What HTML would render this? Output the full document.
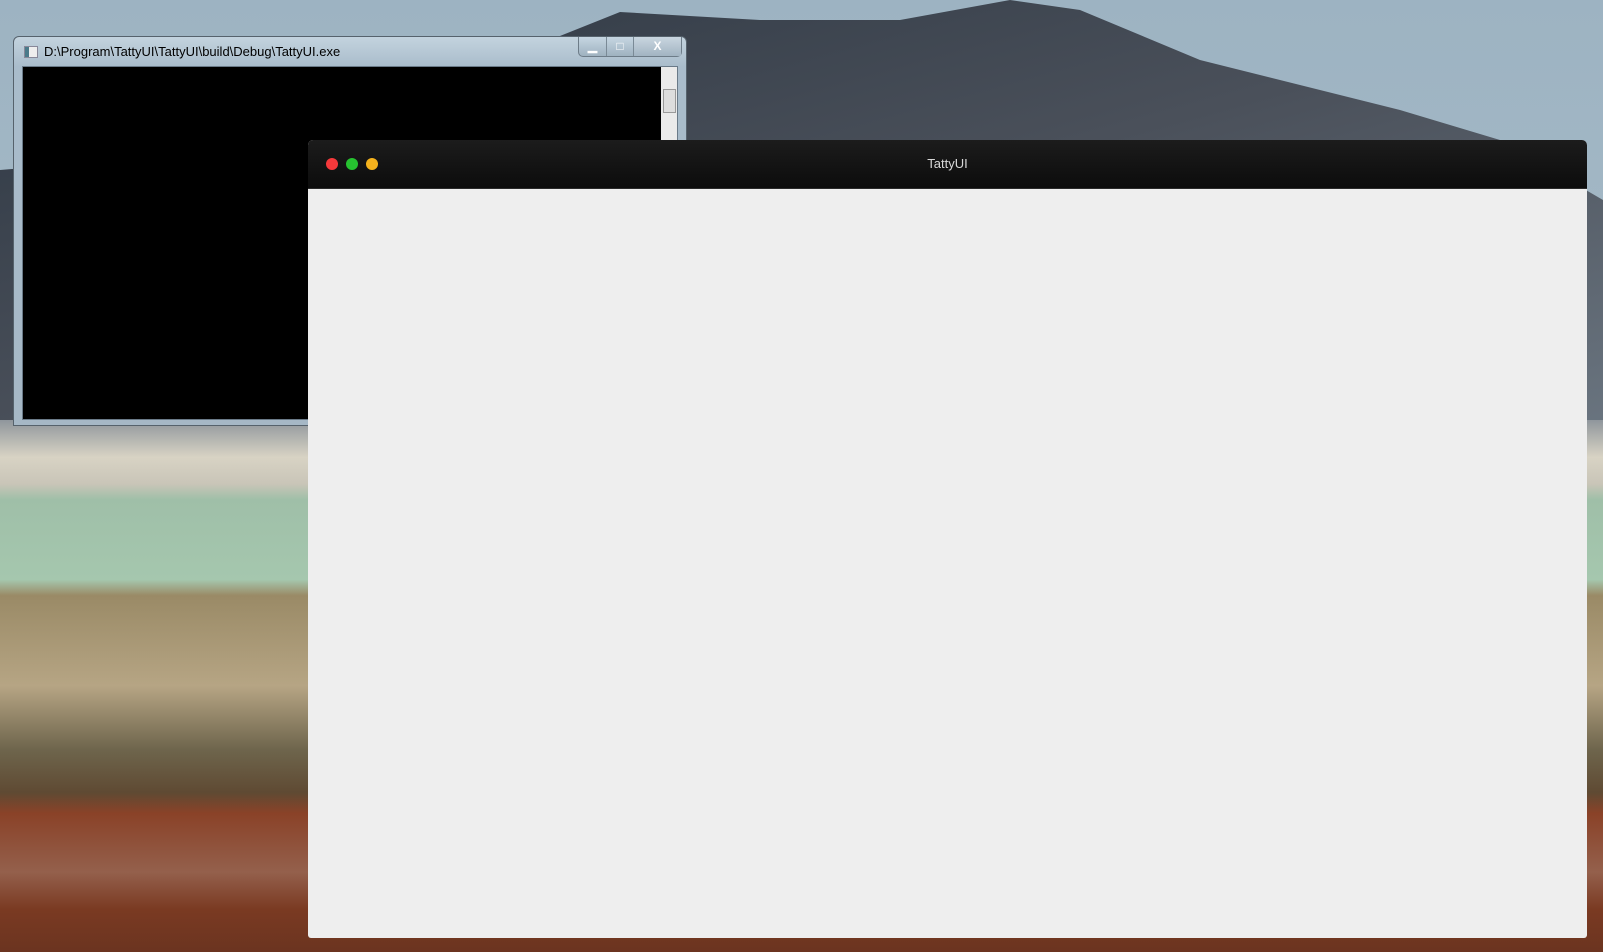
<!DOCTYPE html>
<html><head><style>
html,body{margin:0;padding:0;width:1603px;height:952px;overflow:hidden;position:relative;font-family:"Liberation Sans",sans-serif}
.bg{position:absolute;left:0;top:0}
.con{position:absolute;left:13px;top:36px;width:674px;height:390px;border-radius:6px 6px 0 0;background:linear-gradient(#c3d3de,#a9bccb 30px,#a6b8c6);border:1px solid #56626c;box-sizing:border-box}
.con .t{position:absolute;left:30px;top:7px;font-size:13px;color:#000;font-family:"Liberation Sans",sans-serif}
.con .ic{position:absolute;left:10px;top:9px;width:12px;height:10px;background:#eee;border:1px solid #889}
.con .ic:before{content:"";position:absolute;left:0;top:0;width:4px;height:10px;background:#4a7a8a}
.con .blk{position:absolute;left:8px;top:29px;width:654px;height:352px;background:#000;border:1px solid #6a7a88}
.sb{position:absolute;right:0;top:0;width:16px;height:352px;background:#eaeaea}
.btns{position:absolute;left:564px;top:0;width:102px;height:19px;border:1px solid #6d7c88;border-top:none;border-radius:0 0 5px 5px;background:linear-gradient(#c6d6e2,#9fb2c0);display:flex;font-size:12px;font-weight:bold;color:#fff}
.btns div{border-right:1px solid #7a8a96;text-align:center;line-height:18px}
.mac{position:absolute;left:308px;top:140px;width:1279px;height:798px;background:#eeeeee;border-radius:5px 5px 3px 3px;overflow:hidden}
.tb{height:48px;background:linear-gradient(#1c1c1c,#0c0c0c);position:relative;border-bottom:1px solid #2a2a2a}
.tb .ti{position:absolute;left:0;right:0;top:16px;text-align:center;color:#d8d8d8;font-size:13px}
.d{position:absolute;top:18px;width:12px;height:12px;border-radius:50%}
</style></head><body>
<svg class="bg" width="1603" height="952" viewBox="0 0 1603 952">
<defs>
<linearGradient id="sky" x1="0" y1="0" x2="0" y2="1"><stop offset="0" stop-color="#9db3c2"/><stop offset="1" stop-color="#b3c5cf"/></linearGradient>
<linearGradient id="mt" x1="0" y1="0" x2="1" y2="1"><stop offset="0" stop-color="#2c3642"/><stop offset="0.5" stop-color="#4a505a"/><stop offset="1" stop-color="#6a7580"/></linearGradient>
<linearGradient id="land" x1="0" y1="0" x2="0" y2="1">
<stop offset="0" stop-color="#8f969c"/>
<stop offset="0.07" stop-color="#d8d3c4"/>
<stop offset="0.12" stop-color="#c9c5b8"/>
<stop offset="0.15" stop-color="#9fbfa8"/>
<stop offset="0.30" stop-color="#a5c7ae"/>
<stop offset="0.33" stop-color="#9a8a66"/>
<stop offset="0.50" stop-color="#b6a584"/>
<stop offset="0.62" stop-color="#6e654c"/>
<stop offset="0.70" stop-color="#5f4a33"/>
<stop offset="0.74" stop-color="#8a4228"/>
<stop offset="0.85" stop-color="#94604c"/>
<stop offset="0.92" stop-color="#7a3a22"/>
<stop offset="1" stop-color="#6b3420"/>
</linearGradient>
</defs>
<rect width="1603" height="952" fill="url(#sky)"/>
<path d="M0 170 L120 160 L500 60 L620 12 L760 20 L900 20 L1010 0 L1080 10 L1200 60 L1400 110 L1500 140 L1603 200 L1603 440 L0 440 Z" fill="url(#mt)"/>
<rect x="0" y="420" width="1603" height="532" fill="url(#land)"/>
</svg>
<div class="con">
<div class="ic"></div>
<div class="t">D:\Program\TattyUI\TattyUI\build\Debug\TattyUI.exe</div>
<div class="btns"><div style="width:27px">▁</div><div style="width:26px">□</div><div style="width:47px;border:none;background:linear-gradient(#c9d6e0,#a2b4c2)">X</div></div>
<div class="blk"><div class="sb"><div style="position:absolute;left:2px;top:22px;width:11px;height:22px;background:#ddd;border:1px solid #999"></div></div></div>
</div>
<div class="mac">
<div class="tb">
<div class="d" style="left:18px;background:#f5393b"></div>
<div class="d" style="left:38px;background:#26c230"></div>
<div class="d" style="left:58px;background:#f5b21d"></div>
<div class="ti">TattyUI</div>
</div>
</div>
</body></html>
